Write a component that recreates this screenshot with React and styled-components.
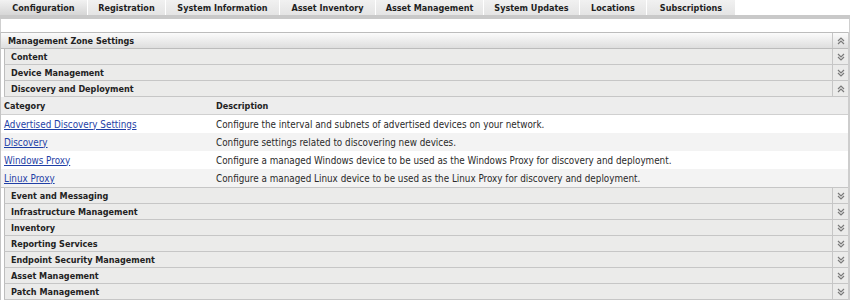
import styled, { createGlobalStyle } from 'styled-components'

const GlobalStyle = createGlobalStyle`
body{
  margin:0;
  background:#fff;
  font-family:"DejaVu Sans Condensed","DejaVu Sans",sans-serif;
  font-size:9px;
  color:#222;
}
`

const tabs = [
  {label:'Configuration', width:88},
  {label:'Registration', width:78},
  {label:'System Information', width:114},
  {label:'Asset Inventory', width:96},
  {label:'Asset Management', width:108},
  {label:'System Updates', width:96},
  {label:'Locations', width:67},
  {label:'Subscriptions', width:89},
]

const groupsBefore = ['Content','Device Management']
const groupsAfter = ['Event and Messaging','Infrastructure Management','Inventory','Reporting Services','Endpoint Security Management','Asset Management','Patch Management']

const rows = [
  {name:'Advertised Discovery Settings', desc:'Configure the interval and subnets of advertised devices on your network.'},
  {name:'Discovery', desc:'Configure settings related to discovering new devices.'},
  {name:'Windows Proxy', desc:'Configure a managed Windows device to be used as the Windows Proxy for discovery and deployment.'},
  {name:'Linux Proxy', desc:'Configure a managed Linux device to be used as the Linux Proxy for discovery and deployment.'},
]

const Page = styled.div`
width:850px;
height:300px;
overflow:hidden;
display:flex;
flex-direction:column;
`
const TabBar = styled.div`
display:flex;
height:15px;
border-bottom:4px solid #c9c9c9;
`
const Tab = styled.div`
width:${p=>p.$width}px;
box-sizing:border-box;
height:15px;
display:flex;
align-items:center;
justify-content:center;
font-weight:bold;
color:#1e1e1e;
border-right:1px solid #fff;
background:${p=>p.$active ? 'linear-gradient(#f2f2f2,#d6d6d6)' : 'linear-gradient(#f1f1f1,#e4e4e4)'};
`
const Spacer = styled.div`
height:15px;
border-left:1px solid #cfcfcf;
border-right:1px solid #cfcfcf;
`
const Panel = styled.div`
flex:1;
display:flex;
flex-direction:column;
border-left:1px solid #c4c4c4;
border-right:2px solid #cdcdcd;
`
const TopHeader = styled.div`
height:15px;
display:flex;
align-items:center;
border-top:1px solid #bcbcbc;
border-bottom:1px solid #bcbcbc;
background:linear-gradient(#fbfbfb,#dedede);
font-weight:bold;
`
const Label = styled.div`
flex:1;
padding-left:${p=>p.$indent}px;
white-space:nowrap;
`
const Toggle = styled.div`
width:15px;
height:100%;
display:flex;
align-items:center;
justify-content:center;
border-left:1px solid #c6c6c6;
`
const GroupRow = styled.div`
height:15px;
display:flex;
align-items:center;
margin-left:3px;
border-left:1px solid #bdbdbd;
border-bottom:1px solid #c6c6c6;
background:#ebebea;
font-weight:bold;
`
const Table = styled.div`
display:flex;
flex-direction:column;
border-bottom:1px solid #c6c6c6;
`
const Line = styled.div`
display:grid;
grid-template-columns:212px 1fr;
align-items:center;
height:${p=>p.$head ? '17px' : '18px'};
padding-left:3px;
background:${p=>p.$bg};
font-weight:${p=>p.$head ? 'bold' : 'normal'};
font-size:${p=>p.$head ? '9px' : '9.8px'};
border-bottom:${p=>p.$head ? '1px solid #d0d0d0' : 'none'};
`
const Link = styled.a`
color:#1f3fa6;
text-decoration:underline;
justify-self:start;
`
const Desc = styled.span`
color:#2a2a2a;
`

function Chevron({up}){
  return (
    <svg width="8" height="8" viewBox="0 0 8 8">
      <g fill="none" stroke="#7a7a7a" strokeWidth="1.2">
        {up ? <>
          <path d="M1 4 L4 1 L7 4"/><path d="M1 7 L4 4 L7 7"/>
        </> : <>
          <path d="M1 1 L4 4 L7 1"/><path d="M1 4 L4 7 L7 4"/>
        </>}
      </g>
    </svg>
  )
}

function Group({title, up}){
  return (
    <GroupRow>
      <Label $indent={6}>{title}</Label>
      <Toggle><Chevron up={up}/></Toggle>
    </GroupRow>
  )
}

function App(){
  return (
    <Page>
      <GlobalStyle/>
      <TabBar>
        {tabs.map((t,i)=><Tab key={t.label} $width={t.width} $active={i===0}>{t.label}</Tab>)}
      </TabBar>
      <Spacer/>
      <Panel>
        <TopHeader>
          <Label $indent={7}>Management Zone Settings</Label>
          <Toggle><Chevron up/></Toggle>
        </TopHeader>
        {groupsBefore.map(g=><Group key={g} title={g}/>)}
        <Group title="Discovery and Deployment" up/>
        <Table>
          <Line $head $bg="#ededed"><span>Category</span><span>Description</span></Line>
          {rows.map((r,i)=>(
            <Line key={r.name} $bg={i%2 ? '#f3f3f3' : '#fff'}>
              <Link href="#">{r.name}</Link>
              <Desc>{r.desc}</Desc>
            </Line>
          ))}
        </Table>
        {groupsAfter.map(g=><Group key={g} title={g}/>)}
      </Panel>
    </Page>
  )
}

export default App
